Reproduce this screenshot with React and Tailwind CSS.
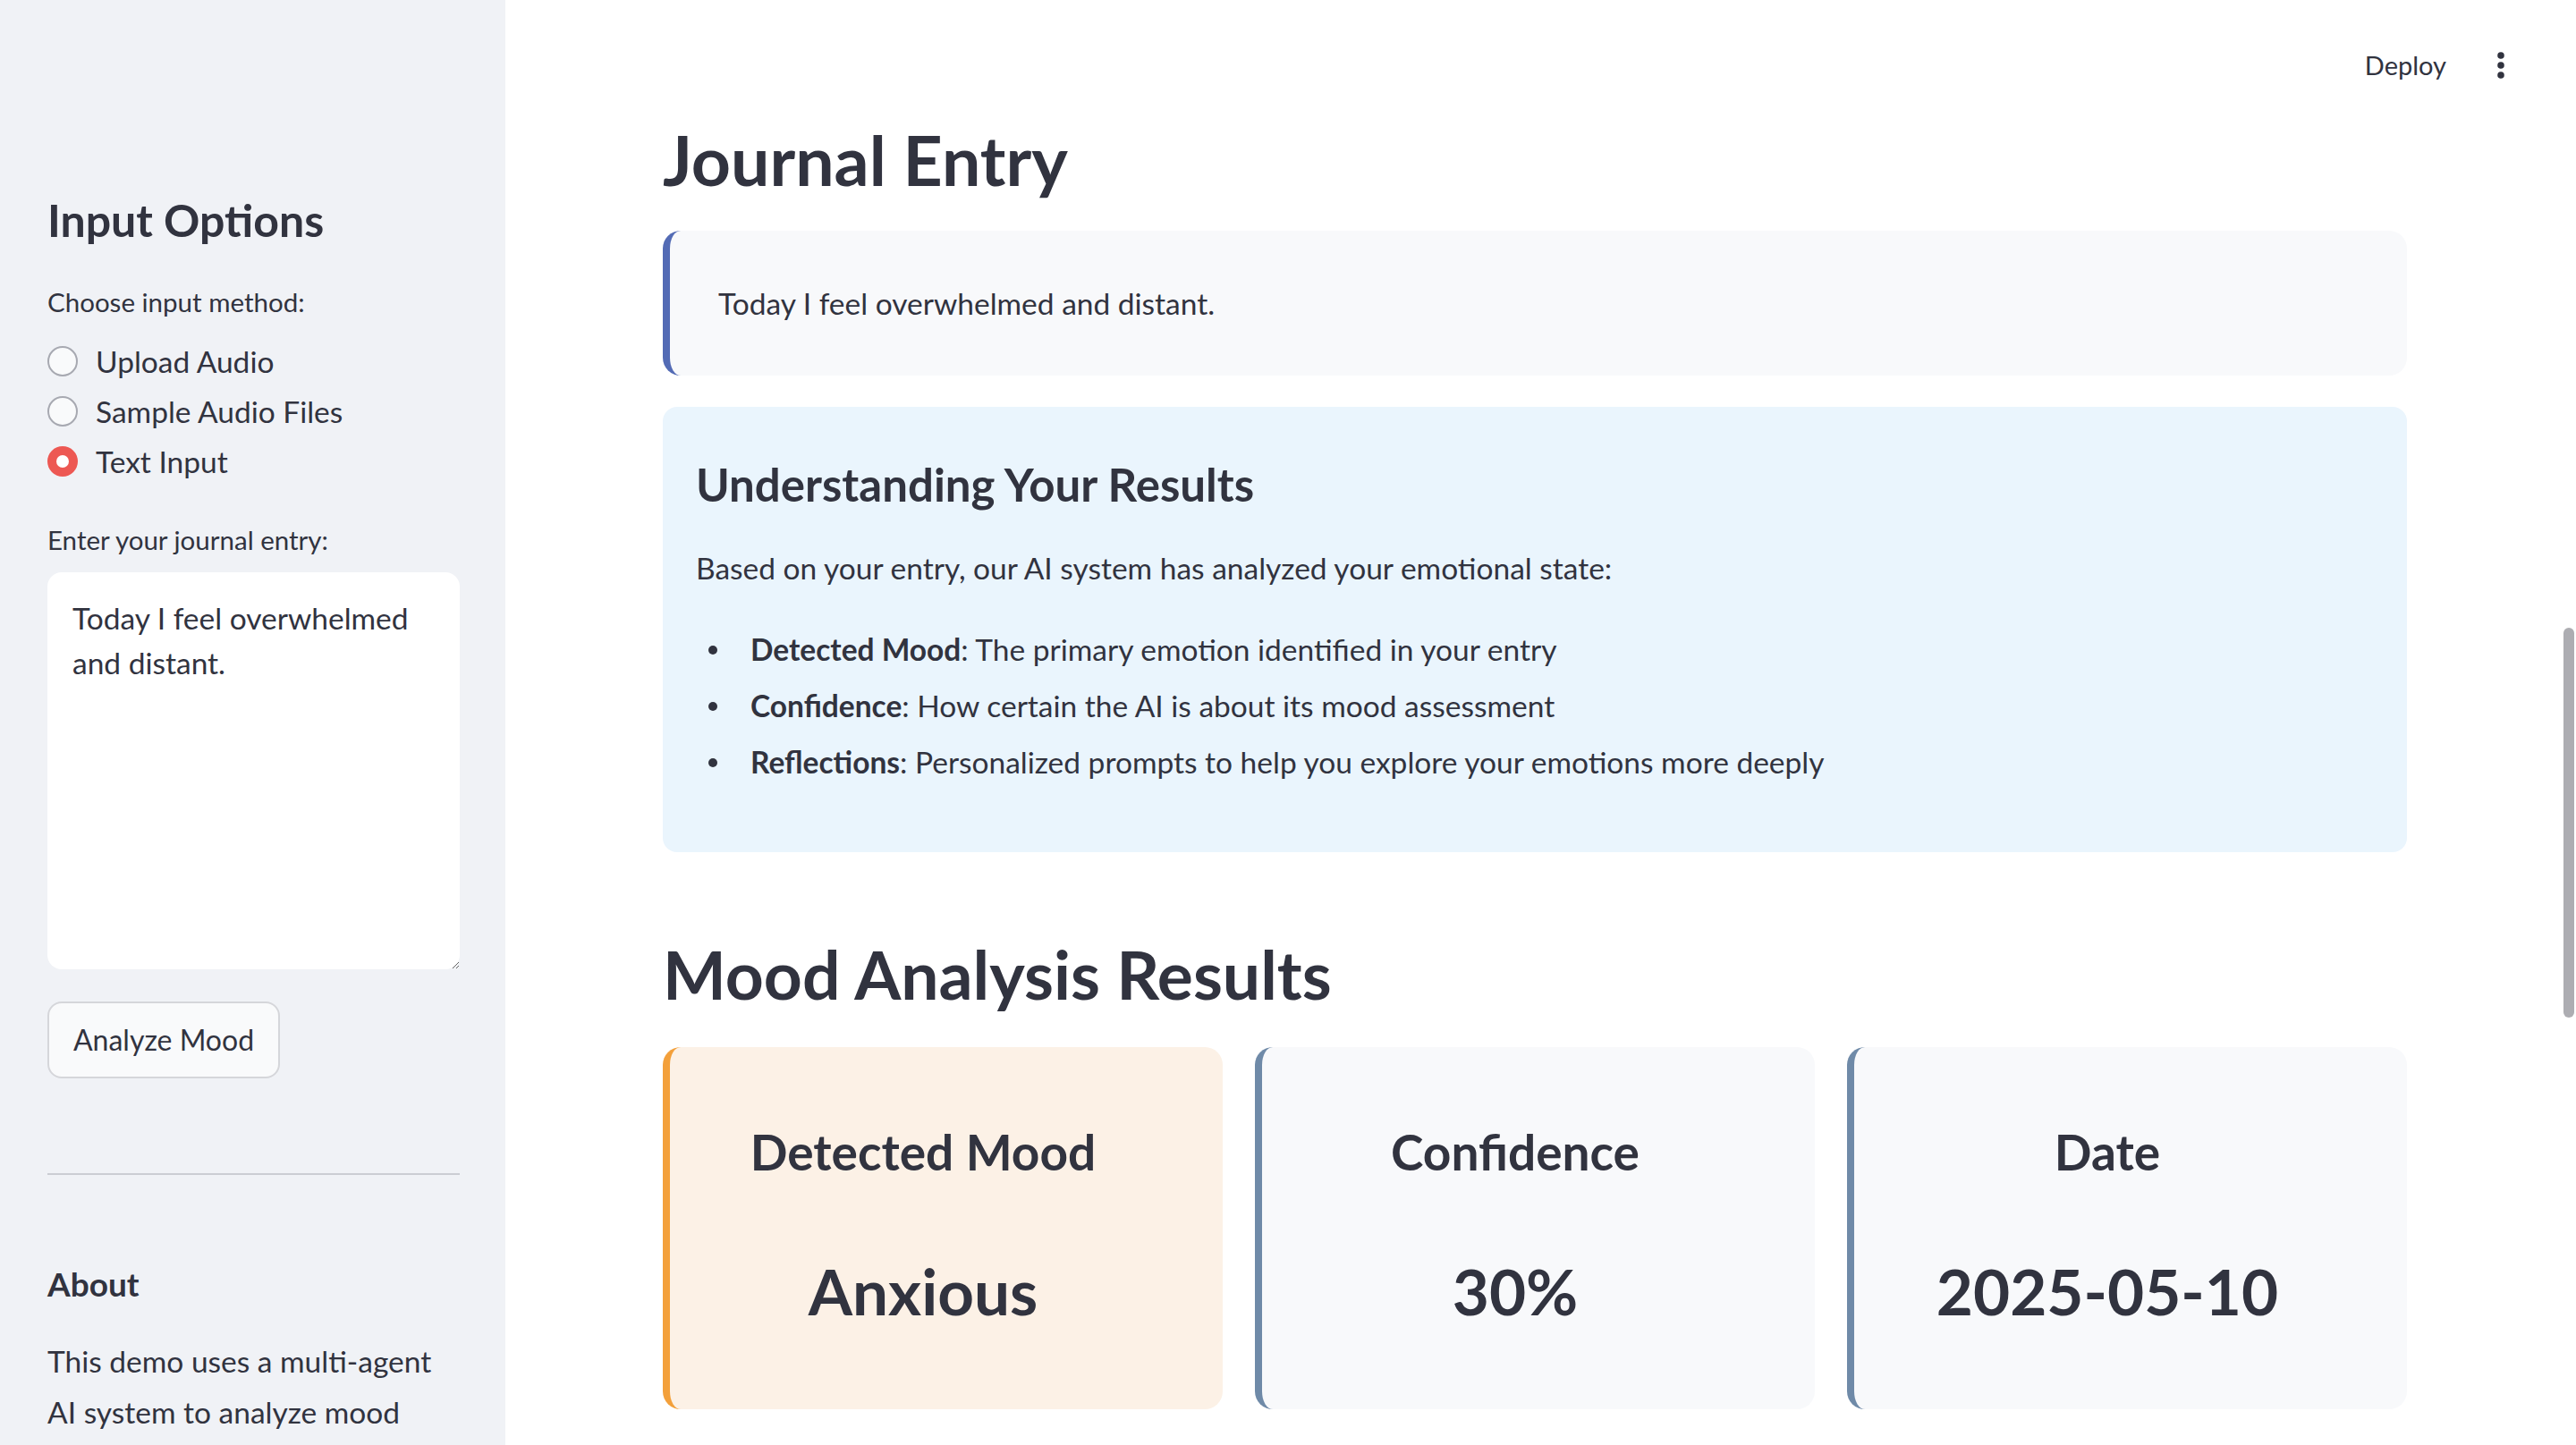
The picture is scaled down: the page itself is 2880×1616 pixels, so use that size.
import React from 'react';

const METHODS = [
  { label: 'Upload Audio', checked: false },
  { label: 'Sample Audio Files', checked: false },
  { label: 'Text Input', checked: true },
];

const LEGEND = [
  { term: 'Detected Mood', text: 'The primary emotion identified in your entry' },
  { term: 'Confidence', text: 'How certain the AI is about its mood assessment' },
  { term: 'Reflections', text: 'Personalized prompts to help you explore your emotions more deeply' },
];

const STATS = [
  { label: 'Detected Mood', value: 'Anxious', tone: 'warm' },
  { label: 'Confidence', value: '30%', tone: 'cool' },
  { label: 'Date', value: '2025-05-10', tone: 'cool' },
];

function Radio({ label, checked }) {
  return (
    <label className="h-[56px] flex items-center gap-[20px]">
      {checked ? (
        <span className="w-[34px] h-[34px] rounded-full bg-[#ed5853] grid place-items-center">
          <span className="w-[14px] h-[14px] rounded-full bg-white" />
        </span>
      ) : (
        <span className="w-[34px] h-[34px] rounded-full border-2 border-[#a7a9b1] bg-[#f9fafb]" />
      )}
      <span className="text-[33.5px] leading-[40px]">{label}</span>
    </label>
  );
}

function Sidebar() {
  return (
    <aside className="w-[565px] shrink-0 h-full bg-[#f0f2f6] pl-[53px] pr-[51px] pt-[210px] flex flex-col">
      <h2 className="text-[50px] leading-[72px] font-bold">Input Options</h2>
      <div className="mt-[36px] text-[29.5px] leading-[40px]">Choose input method:</div>
      <div className="mt-[18px] flex flex-col">
        {METHODS.map((m) => <Radio key={m.label} {...m} />)}
      </div>
      <div className="mt-[40px] text-[29.5px] leading-[40px]">Enter your journal entry:</div>
      <textarea
        readOnly
        defaultValue="Today I feel overwhelmed and distant."
        className="mt-[16px] h-[444px] w-full shrink-0 rounded-[16px] bg-white px-[28px] pt-[26px] text-[33.5px] leading-[50px] text-[#31333f] resize-y outline-none"
      />
      <button type="button" className="mt-[36px] self-start h-[86px] px-[27px] rounded-[16px] border-2 border-[#d5d6da] bg-[#f9fafb] text-[32px] leading-[40px]">
        Analyze Mood
      </button>
      <div className="mt-[106px] h-[2px] bg-[#cbcdd3]" />
      <h3 className="mt-[94px] text-[37px] leading-[56px] font-bold">About</h3>
      <p className="mt-[30px] text-[33.5px] leading-[57px]">
        This demo uses a multi-agent<br />AI system to analyze mood
      </p>
    </aside>
  );
}

function Header() {
  return (
    <header className="h-[120px] pt-[26px] pr-[80px] flex items-center justify-end gap-[57px]">
      <span className="text-[29px] leading-[40px]">Deploy</span>
      <svg width="8" height="30" viewBox="0 0 8 30" className="fill-[#31333f]">
        <circle cx="4" cy="4" r="3.8" />
        <circle cx="4" cy="15" r="3.8" />
        <circle cx="4" cy="26" r="3.8" />
      </svg>
    </header>
  );
}

function StatCard({ label, value, tone }) {
  const skin = tone === 'warm'
    ? 'bg-[#fcf1e6] border-[#f3a03b]'
    : 'bg-[#f8f9fb] border-[#6f8aa8]';
  return (
    <div className={`h-[405px] rounded-[20px] border-l-[8px] pl-[20px] pr-[72px] pt-[81px] text-center ${skin}`}>
      <div className="text-[55px] leading-[72px] font-bold">{label}</div>
      <div className="mt-[72px] text-[71px] leading-[96px] font-bold">{value}</div>
    </div>
  );
}

function Main() {
  return (
    <main className="flex-1 h-full flex flex-col">
      <Header />
      <div className="pl-[176px] w-[2126px] flex flex-col">
        <h2 className="mt-[10px] text-[77px] leading-[96px] font-bold">Journal Entry</h2>

        <div className="mt-[32px] h-[162px] rounded-[20px] border-l-[8px] border-[#536bb5] bg-[#f8f9fb] pl-[54px] flex items-center">
          <p className="text-[33.5px] leading-[51px]">Today I feel overwhelmed and distant.</p>
        </div>

        <section className="mt-[35px] h-[498px] rounded-[16px] bg-[#eaf5fd] pl-[37px] pt-[51px]">
          <h3 className="text-[51px] leading-[72px] font-bold">Understanding Your Results</h3>
          <p className="mt-[32px] text-[33.5px] leading-[51px]">
            Based on your entry, our AI system has analyzed your emotional state:
          </p>
          <ul className="mt-[40px] flex flex-col gap-[12px]">
            {LEGEND.map((l) => (
              <li key={l.term} className="flex items-center text-[33.5px] leading-[51px]">
                <span className="w-[10px] h-[10px] rounded-full bg-[#31333f] ml-[14px] mr-[37px]" />
                <span><b className="font-bold">{l.term}</b>: {l.text}</span>
              </li>
            ))}
          </ul>
        </section>

        <h2 className="mt-[88px] text-[75px] leading-[96px] font-bold">Mood Analysis Results</h2>

        <div className="mt-[34px] grid grid-cols-3 gap-[36px]">
          {STATS.map((s) => <StatCard key={s.label} {...s} />)}
        </div>
      </div>
    </main>
  );
}

export default function App() {
  return (
    <div className="relative flex w-[2880px] h-[1616px] overflow-hidden bg-white text-[#31333f] font-['Lato',sans-serif]">
      <Sidebar />
      <Main />
      <div className="absolute right-[2px] top-[702px] w-[12px] h-[436px] rounded-full bg-[#adadb2]" />
    </div>
  );
}
